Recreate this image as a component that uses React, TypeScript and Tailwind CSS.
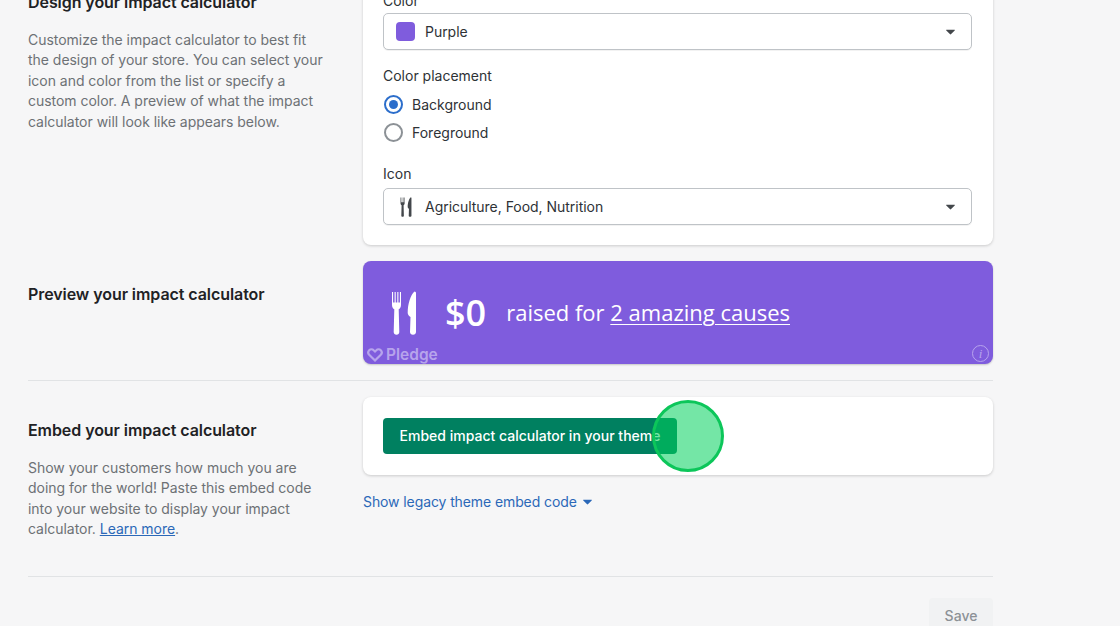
const FONT = "font-['Inter','Noto_Sans',sans-serif]";

const Caret = ({ className }: { className: string }) => (
  <svg viewBox="0 0 10 6" className={className} fill="currentColor">
    <path d="M.6.4h8.800c.4 0 .6.5.3.8L5.400 5.500a.6.6 0 0 1-.8 0L.3 1.200C0 .9.2.4.6.4z" />
  </svg>
);

const Cutlery = ({ className, fill }: { className: string; fill: string }) => (
  <svg viewBox="0 0 24 44" className={className} fill={fill}>
    <path d="M0 1h1.100v10.500h1.500V1h1.100v10.500h1.600V1h1.100v10.500h1.500V1H9v13c0 2.200-1.100 3.600-2.300 4.300l.6 22.700c0 1.500-1.100 2.700-2.800 2.700s-2.800-1.200-2.800-2.700l.6-22.700C1.100 17.600 0 16.200 0 14V1z" />
    <path d="M22.500.5c1 0 1.500.7 1.500 1.800V41c0 1.500-1.200 2.700-3 2.700s-3-1.200-3-2.700l.5-15c-1.500-1-2.800-2.500-2.800-4C15.700 13 18.500 4 22.500.5z" />
  </svg>
);

const Select = ({ icon, label }: { icon: React.ReactNode; label: string }) => (
  <div className="flex h-[37px] items-center rounded-[5px] border border-[#bfc3c7] bg-white pl-[12px] pr-[16px] shadow-[0_1px_0_rgba(0,0,0,0.05)]">
    <div className="flex w-[29px] shrink-0 items-center">{icon}</div>
    <span className="text-[14px] tracking-[-0.03px] text-[#2e3236]">{label}</span>
    <Caret className="ml-auto h-[6px] w-[9px] text-[#43474b]" />
  </div>
);

const Radio = ({ label, checked }: { label: string; checked?: boolean }) => (
  <div className="flex h-[28.5px] items-center gap-[9px] pl-[1px]">
    {checked ? (
      <div className="flex h-[19px] w-[19px] items-center justify-center rounded-full border-2 border-[#2c6ecb]">
        <div className="h-[9px] w-[9px] rounded-full bg-[#2c6ecb]" />
      </div>
    ) : (
      <div className="h-[19px] w-[19px] rounded-full border-2 border-[#8c9196] bg-white" />
    )}
    <span className="text-[14px] text-[#2e3236]">{label}</span>
  </div>
);

export default function App() {
  return (
    <div className={`relative h-[626px] w-[1120px] overflow-hidden bg-[#f6f6f7] ${FONT}`}>
      <div className="ml-[28px] flex w-[965px] flex-col">
        {/* design section, scrolled partly off the top */}
        <div className="-mt-[29px] flex">
          <div className="w-[335px] shrink-0 pt-[21px]">
            <h2 className="text-[16px] font-semibold leading-[20px] tracking-[-0.07px] text-[#1f2225]">Design your impact calculator</h2>
            <p className="mt-[18px] w-[300px] text-[14px] leading-[20.4px] tracking-[-0.03px] text-[#6d7175]">
              Customize the impact calculator to best fit the design of your store. You can select your icon and color from the list or specify a custom color. A preview of what the impact calculator will look like appears below.
            </p>
          </div>
          <div className="h-[274px] w-[630px] rounded-b-[8px] bg-white pl-[20px] pr-[21px] pt-[20px] shadow-[0_1px_3px_rgba(0,0,0,0.18)]">
            <div className="text-[14px] leading-[20px] text-[#2e3236]">Color</div>
            <div className="mt-[2px]">
              <Select icon={<div className="h-[19px] w-[19px] rounded-[4px] bg-[#7f5cdd]" />} label="Purple" />
            </div>
            <div className="mt-[16px] text-[14px] leading-[20px] text-[#2e3236]">Color placement</div>
            <div className="mt-[4px]">
              <Radio label="Background" checked />
              <Radio label="Foreground" />
            </div>
            <div className="mt-[17px] text-[14px] leading-[20px] text-[#2e3236]">Icon</div>
            <div className="mt-[4px]">
              <Select icon={<Cutlery className="ml-[4px] h-[20px] w-[12px]" fill="#43474b" />} label="Agriculture, Food, Nutrition" />
            </div>
          </div>
        </div>

        {/* preview */}
        <div className="mt-[16px] flex">
          <div className="w-[335px] shrink-0 pt-[23px]">
            <h2 className="text-[16px] font-semibold leading-[20px] tracking-[-0.07px] text-[#1f2225]">Preview your impact calculator</h2>
          </div>
          <div className="relative flex h-[103px] w-[630px] items-center overflow-hidden rounded-[8px] bg-[#7f5cdd] pl-[29px] font-['Open_Sans',sans-serif] text-white shadow-[0_1px_2px_rgba(0,0,0,0.2)]">
            <Cutlery className="h-[44px] w-[24px]" fill="#ffffff" />
            <span className="ml-[29px] text-[36px] font-semibold leading-none">$0</span>
            <span className="ml-[20px] pb-[2px] text-[22px] leading-none">
              raised for <span className="underline decoration-1 underline-offset-[3px]">2 amazing causes</span>
            </span>
            <div className="absolute bottom-[-1px] left-[4px] flex items-center gap-[3px] font-['Inter',sans-serif] text-[15.5px] font-semibold leading-[20px] text-[#b7a4ec]">
              <svg viewBox="0 0 16 14" className="h-[14px] w-[16px]" fill="none" stroke="currentColor" strokeWidth="2.2">
                <path d="M8 12.500 2.200 6.800a3.300 3.300 0 0 1 0-4.500 3.200 3.200 0 0 1 4.500 0L8 3.500l1.300-1.200a3.200 3.200 0 0 1 4.500 0 3.300 3.300 0 0 1 0 4.500L8 12.500z" />
              </svg>
              Pledge
            </div>
            <div className="absolute bottom-[2px] right-[4px] flex h-[17px] w-[17px] items-center justify-center rounded-full border border-[#b7a4ec] font-['Liberation_Serif',serif] text-[13px] italic leading-none text-[#b7a4ec]">
              i
            </div>
          </div>
        </div>

        <div className="mt-[16px] h-px bg-[#e1e3e5]" />

        {/* embed */}
        <div className="mt-[16px] flex">
          <div className="w-[335px] shrink-0 pt-[23px]">
            <h2 className="text-[16px] font-semibold leading-[20px] tracking-[-0.07px] text-[#1f2225]">Embed your impact calculator</h2>
            <p className="mt-[18px] w-[300px] text-[14px] leading-[20.4px] tracking-[-0.03px] text-[#6d7175]">
              Show your customers how much you are doing for the world! Paste this embed code into your website to display your impact calculator. <span className="text-[#2b68b8] underline">Learn more</span>.
            </p>
          </div>
          <div className="w-[630px]">
            <div className="h-[78px] rounded-[8px] bg-white px-[20px] pt-[21px] shadow-[0_1px_3px_rgba(0,0,0,0.18)]">
              <button className="h-[36px] w-[294px] rounded-[4px] bg-[#008060] pb-[1px] text-[14px] font-medium text-white">
                Embed impact calculator in your theme
              </button>
            </div>
            <div className="mt-[17px] flex items-center gap-[6px] text-[14px] leading-[20px] tracking-[-0.1px] text-[#2b68b8]">
              Show legacy theme embed code
              <Caret className="h-[6px] w-[9px]" />
            </div>
          </div>
        </div>

        <div className="mt-[36px] h-px bg-[#e1e3e5]" />

        <div className="mt-[21px] flex justify-end">
          <button className="h-[36px] w-[64px] rounded-[4px] bg-[#f1f2f3] text-[14px] font-medium text-[#8c9196]">Save</button>
        </div>
      </div>

      {/* click marker from the recording */}
      <div className="absolute left-[652px] top-[400px] h-[72px] w-[72px] rounded-full border-[3px] border-[#0cc65a] bg-[rgba(0,209,92,0.545)]" />
    </div>
  );
}
